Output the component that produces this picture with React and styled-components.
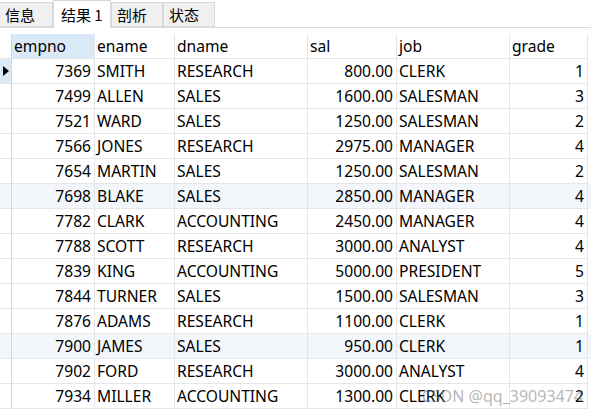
import React from 'react'
import styled, { createGlobalStyle } from 'styled-components'

const GlobalStyle = createGlobalStyle`
    html, body {
        margin: 0;
        padding: 0;
        background: #ffffff;
    }
    body {
        font-family: "Noto Sans", "Noto Sans CJK SC", sans-serif;
        color: #000000;
    }
`

const Page = styled.div`
    position: relative;
    width: 591px;
    height: 411px;
    overflow: hidden;
    background: #ffffff;
`

const TabBar = styled.div`
    display: flex;
    align-items: flex-end;
    height: 28px;
    border-bottom: 1px solid #d9d9d9;
    box-sizing: border-box;
`

const Tab = styled.div`
    box-sizing: border-box;
    width: ${p => p.$width}px;
    height: ${p => (p.$active ? 28 : 25)}px;
    margin-bottom: ${p => (p.$active ? -1 : 0)}px;
    padding-left: ${p => p.$pad}px;
    display: flex;
    align-items: center;
    background: ${p => (p.$active ? '#ffffff' : '#f0f0f0')};
    border: 1px solid #d9d9d9;
    border-bottom: ${p => (p.$active ? 'none' : '1px solid #d9d9d9')};
    border-left: ${p => (p.$first ? 'none' : '1px solid #d9d9d9')};
    font-family: "Noto Sans CJK SC", sans-serif;
    font-size: 15px;
    color: #000;
`

const Grid = styled.div`
    margin-top: 6px;
    display: flex;
    flex-direction: column;
`

const Row = styled.div`
    display: grid;
    grid-template-columns: 12px 83px 80px 133px 89px 113px 78px;
    height: 25px;
    background: ${p => (p.$shade ? '#f3f7fc' : 'transparent')};
`

const Cell = styled.div`
    box-sizing: border-box;
    height: 25px;
    border-right: 1px solid #e6e6e6;
    border-bottom: 1px solid #e6e6e6;
    padding: 0 ${p => (p.$right ? 3 : 2)}px 0 ${p => (p.$right ? 0 : 2)}px;
    display: flex;
    align-items: center;
    justify-content: ${p => (p.$right ? 'flex-end' : 'flex-start')};
    font-size: 15.6px;
    color: #000;
    white-space: nowrap;
    overflow: hidden;
`

const HeadCell = styled(Cell)`
    padding-left: 2px;
    background: ${p => (p.$sorted ? '#d9e9f7' : 'transparent')};
`

const Gutter = styled.div`
    box-sizing: border-box;
    height: 25px;
    border-right: 1px solid #d5d5d5;
    border-bottom: 1px solid #e6e6e6;
    display: flex;
    align-items: center;
    padding-left: 3px;
    background: ${p => (p.$current ? '#dce9f6' : 'transparent')};
`

const Pointer = styled.span`
    width: 0;
    height: 0;
    border-top: 5px solid transparent;
    border-bottom: 5px solid transparent;
    border-left: 6px solid #000;
`

const Watermark = styled.div`
    position: absolute;
    right: 8px;
    bottom: 4px;
    font-size: 16px;
    color: rgba(110, 110, 110, 0.5);
    pointer-events: none;
`

const tabs = [
    { label: '信息', width: 53, pad: 5, first: true },
    { label: '结果 1', width: 58, pad: 7, active: true },
    { label: '剖析', width: 52, pad: 5 },
    { label: '状态', width: 52, pad: 5 },
]

const columns = ['empno', 'ename', 'dname', 'sal', 'job', 'grade']

const rows = [
    [7369, 'SMITH', 'RESEARCH', '800.00', 'CLERK', 1],
    [7499, 'ALLEN', 'SALES', '1600.00', 'SALESMAN', 3],
    [7521, 'WARD', 'SALES', '1250.00', 'SALESMAN', 2],
    [7566, 'JONES', 'RESEARCH', '2975.00', 'MANAGER', 4],
    [7654, 'MARTIN', 'SALES', '1250.00', 'SALESMAN', 2],
    [7698, 'BLAKE', 'SALES', '2850.00', 'MANAGER', 4],
    [7782, 'CLARK', 'ACCOUNTING', '2450.00', 'MANAGER', 4],
    [7788, 'SCOTT', 'RESEARCH', '3000.00', 'ANALYST', 4],
    [7839, 'KING', 'ACCOUNTING', '5000.00', 'PRESIDENT', 5],
    [7844, 'TURNER', 'SALES', '1500.00', 'SALESMAN', 3],
    [7876, 'ADAMS', 'RESEARCH', '1100.00', 'CLERK', 1],
    [7900, 'JAMES', 'SALES', '950.00', 'CLERK', 1],
    [7902, 'FORD', 'RESEARCH', '3000.00', 'ANALYST', 4],
    [7934, 'MILLER', 'ACCOUNTING', '1300.00', 'CLERK', 2],
]

const shaded = [5, 11]
const rightAligned = [0, 3, 5]

const App = () => {
    return (
        <Page>
            <GlobalStyle />
            <TabBar>
                {tabs.map(t => (
                    <Tab key={t.label} $width={t.width} $pad={t.pad} $active={t.active} $first={t.first}>
                        {t.label}
                    </Tab>
                ))}
            </TabBar>

            <Grid>
                <Row>
                    <Gutter />
                    {columns.map((c, i) => (
                        <HeadCell key={c} $sorted={i === 0}>{c}</HeadCell>
                    ))}
                </Row>

                {rows.map((r, ri) => (
                    <Row key={r[0]} $shade={shaded.includes(ri)}>
                        <Gutter $current={ri === 0}>
                            {ri === 0 && <Pointer />}
                        </Gutter>
                        {r.map((v, ci) => (
                            <Cell key={ci} $right={rightAligned.includes(ci)}>{v}</Cell>
                        ))}
                    </Row>
                ))}
            </Grid>

            <Watermark>CSDN @qq_39093474</Watermark>
        </Page>
    )
}

export default App
